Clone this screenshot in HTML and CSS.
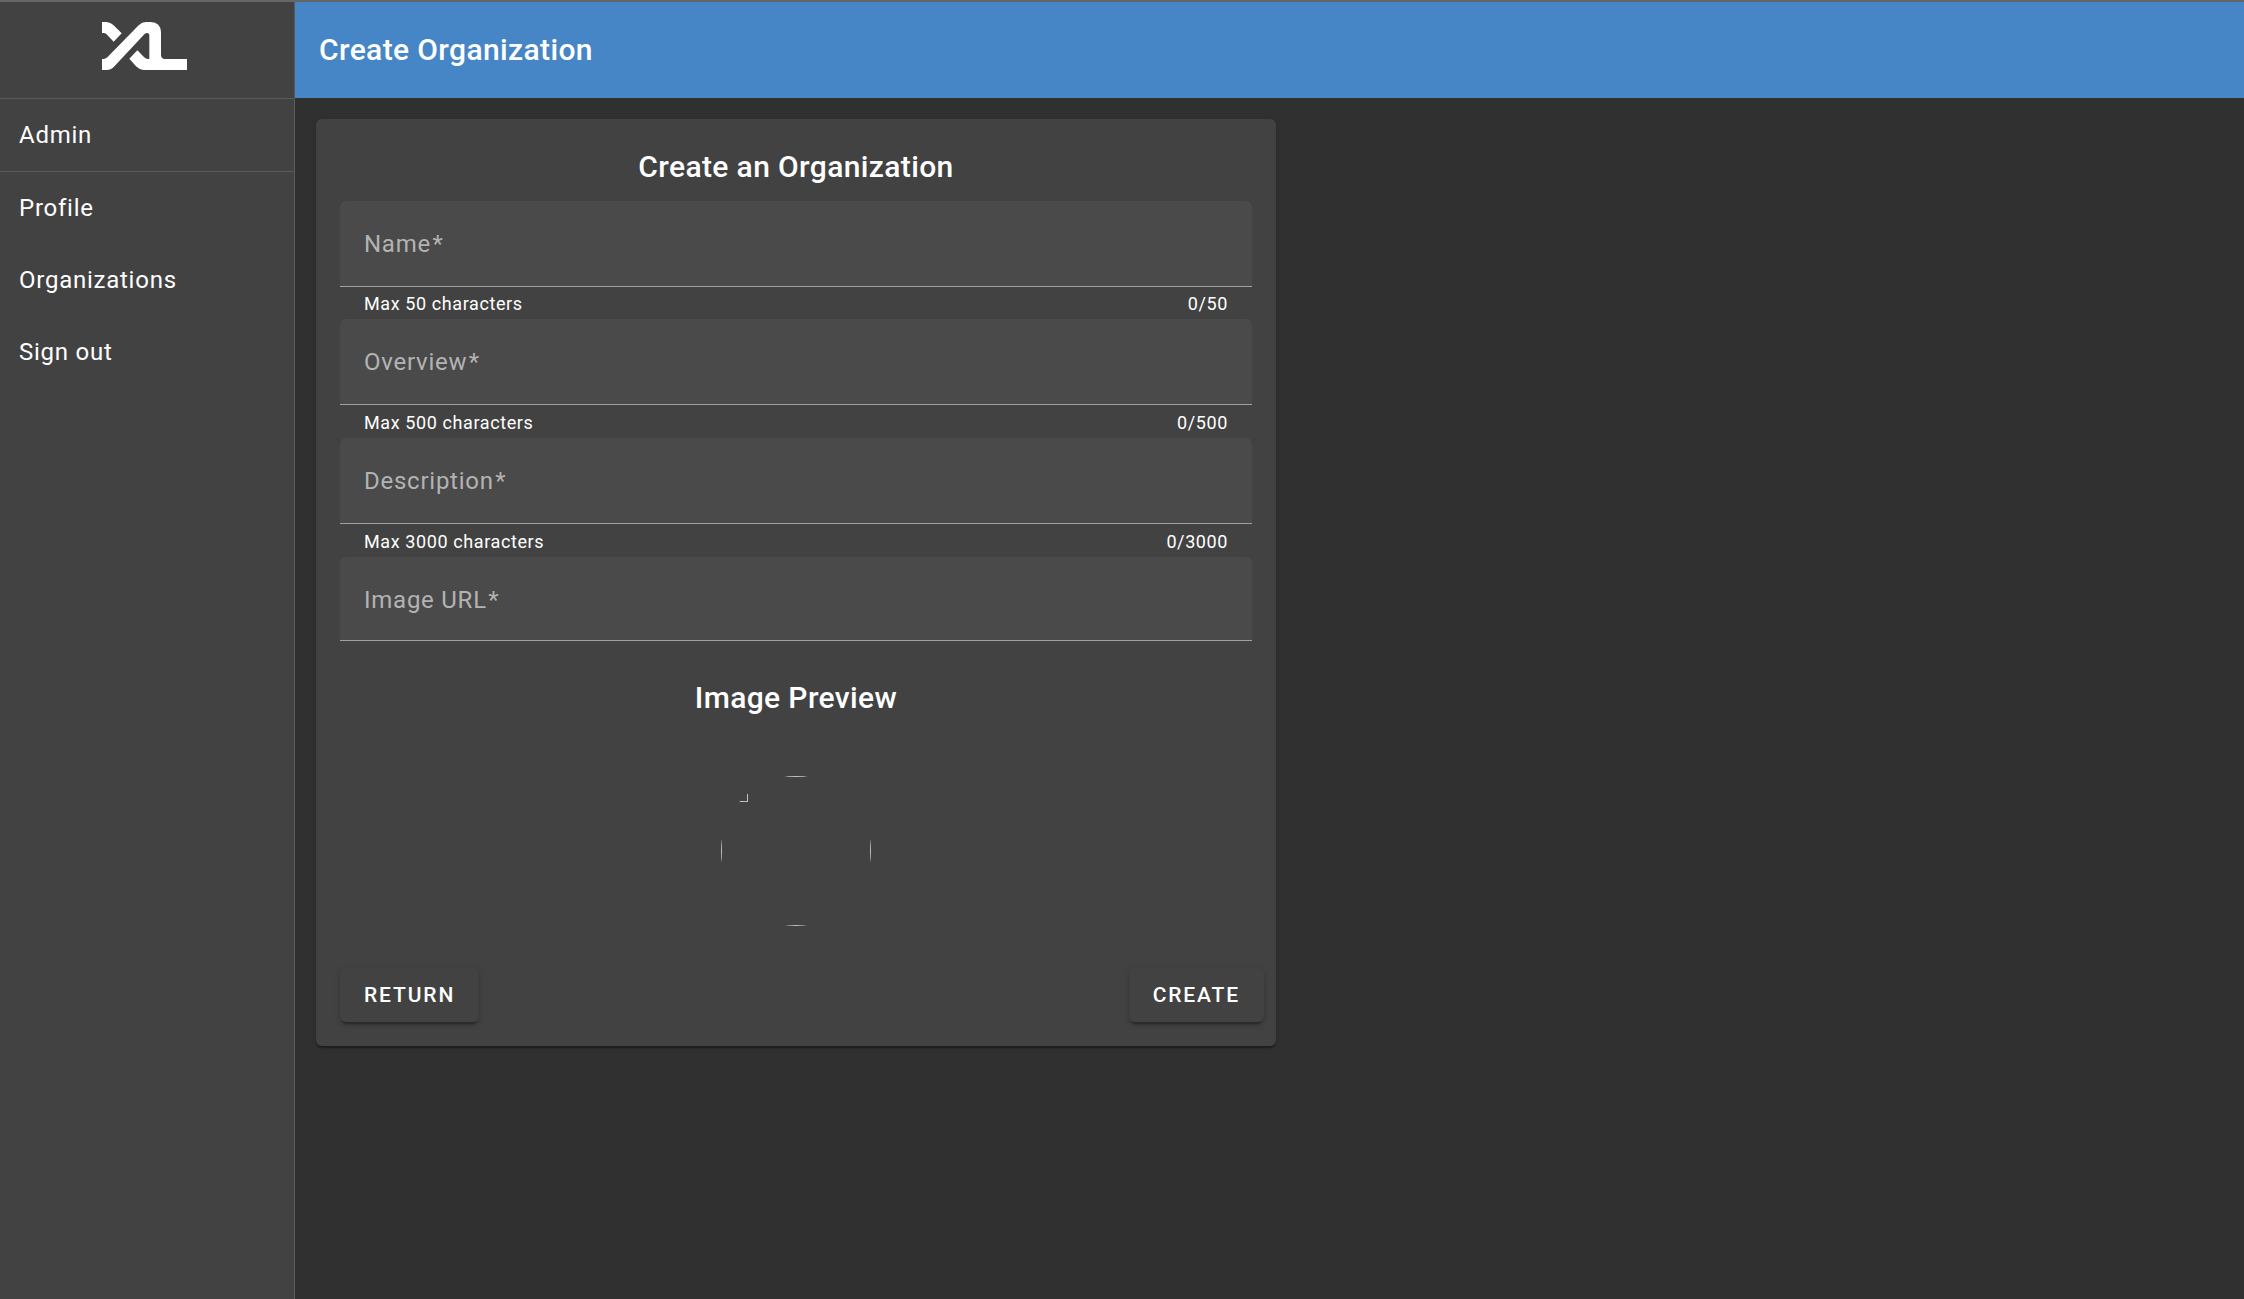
FILE: index.html
```html
<!DOCTYPE html>
<html lang="en">
<head>
<meta charset="utf-8">
<title>Create Organization</title>
<link rel="stylesheet" href="styles.css">
</head>
<body>
<div class="app">
  <nav class="sidenav">
    <div class="brand">
      <svg class="logo" viewBox="66 66 255 144" aria-label="XL">
        <path d="M66 66H80Q92 67 100 75L125 100L101 125L79 102Q76 99 70 99H66Z"/>
        <path d="M66 177H72Q78 176 82 172L176 76Q186 66 198 66H212Q242 68 243 96V166Q244 176 252 177H321V210H190Q178 209 168 199L148 176L172 151L191 170Q198 177 204 177H208V104Q207 99 201 99Q197 99 193 103L104 198Q94 210 80 210H66Z"/>
      </svg>
    </div>
    <a class="nav-item nav-admin">Admin</a>
    <a class="nav-item">Profile</a>
    <a class="nav-item">Organizations</a>
    <a class="nav-item">Sign out</a>
  </nav>
  <div class="page">
    <header class="toolbar">Create Organization</header>
    <main class="content">
      <form class="card">
        <h2 class="title">Create an Organization</h2>
        <div class="field">Name<span class="required">*</span></div>
        <div class="hint hint-name"><span>Max 50 characters</span><span>0/50</span></div>
        <div class="field">Overview<span class="required">*</span></div>
        <div class="hint"><span>Max 500 characters</span><span>0/500</span></div>
        <div class="field">Description<span class="required">*</span></div>
        <div class="hint"><span>Max 3000 characters</span><span>0/3000</span></div>
        <div class="field field-url">Image URL<span class="required">*</span></div>
        <h2 class="title title-preview">Image Preview</h2>
        <div class="preview"><div class="frame"><div class="missing"></div></div></div>
        <div class="actions">
          <button class="button" type="button">RETURN</button>
          <button class="button" type="button">CREATE</button>
        </div>
      </form>
    </main>
  </div>
</div>
</body>
</html>
```
FILE: styles.css
```css
* {
  box-sizing: border-box;
}

body {
  margin: 0;
  background: #303030;
  color: #fff;
  font-family: Roboto, "Liberation Sans", sans-serif;
}

.app {
  display: flex;
  height: 1299px;
  border-top: 2px solid #666;
}

.sidenav {
  flex: none;
  width: 295px;
  background: #424242;
  border-right: 1px solid #5a5a5a;
}

.brand {
  display: flex;
  justify-content: center;
  height: 97px;
  padding: 20px 5px 0 0;
  border-bottom: 1px solid #5a5a5a;
}

.logo {
  width: 85px;
  height: 48px;
  fill: #fff;
}

.nav-item {
  display: flex;
  align-items: center;
  height: 72px;
  padding-left: 19px;
  font-size: 24px;
  letter-spacing: 0.75px;
}

.nav-admin {
  height: 73px;
  border-bottom: 1px solid #5a5a5a;
}

.page {
  flex: 1;
}

.toolbar {
  display: flex;
  align-items: center;
  height: 96px;
  padding: 0 0 2px 24px;
  background: #4686c6;
  font-size: 30px;
  font-weight: 500;
  letter-spacing: 0.375px;
}

.content {
  padding: 21px;
}

.card {
  width: 960px;
  height: 927px;
  padding: 24px;
  border-radius: 6px;
  background: #424242;
  box-shadow: 0 3px 1.5px -1.5px rgba(0, 0, 0, 0.2), 0 1.5px 1.5px rgba(0, 0, 0, 0.14), 0 1.5px 4.5px rgba(0, 0, 0, 0.12);
}

.title {
  height: 58px;
  margin: 0;
  font-size: 30px;
  font-weight: 500;
  line-height: 48px;
  letter-spacing: 0.375px;
  text-align: center;
}

.field {
  height: 86px;
  padding-left: 24px;
  border-bottom: 1px solid #a0a0a0;
  border-radius: 6px 6px 0 0;
  background: #4a4a4a;
  color: #b3b3b3;
  font-size: 24px;
  line-height: 86px;
  letter-spacing: 0.75px;
}

.required {
  margin-left: 1.5px;
}

.field-url {
  height: 84px;
}

.hint {
  display: flex;
  justify-content: space-between;
  height: 33px;
  padding: 0 24px;
  font-size: 18px;
  line-height: 36px;
  letter-spacing: 0.6px;
}

.hint-name {
  height: 32px;
  line-height: 34px;
}

.title-preview {
  margin-top: 33px;
}

.preview {
  width: 150px;
  height: 150px;
  margin: 44px auto 42px;
  border-radius: 50%;
  overflow: hidden;
}

.frame {
  height: 150px;
  border: 1px solid #c0c0c0;
}

.missing {
  width: 26px;
  height: 25px;
  border: solid #c0c0c0;
  border-width: 0 1px 1px 0;
}

.actions {
  display: flex;
  justify-content: space-between;
  margin-right: -12px;
}

.button {
  height: 54px;
  padding: 0 24px;
  border: 0;
  border-radius: 6px;
  background: #424242;
  color: #fff;
  font: 500 21px Roboto, "Liberation Sans", sans-serif;
  letter-spacing: 1.875px;
  box-shadow: 0 4.5px 1.5px -3px rgba(0, 0, 0, 0.2), 0 3px 3px rgba(0, 0, 0, 0.14), 0 1.5px 7.5px rgba(0, 0, 0, 0.12);
}
```
